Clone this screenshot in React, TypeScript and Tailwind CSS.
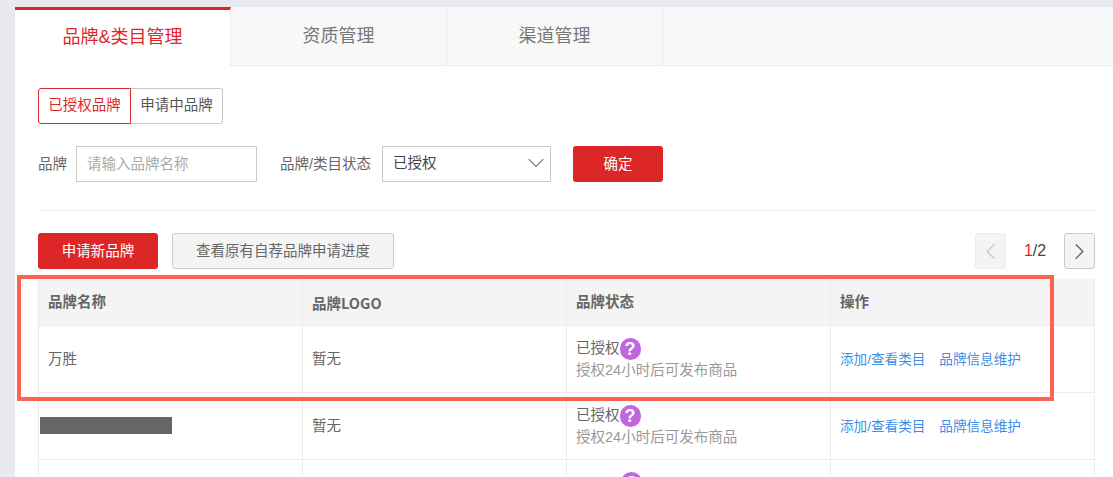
import * as React from "react";
import { ChevronDown, ChevronLeft, ChevronRight } from "lucide-react";

const font = "font-['Liberation_Sans','Noto_Sans_CJK_SC',sans-serif]";

function Tab({ label, active }: { label: string; active?: boolean }) {
  if (active) {
    return (
      <div className="w-[216px] h-[59px] shrink-0 bg-white border-t-[3px] border-r border-r-[#ececec] border-t-[#dd2727] flex items-center justify-center pb-[2px] text-[18px] text-[#dd2727]">
        {label}
      </div>
    );
  }
  return (
    <div className="w-[216px] h-[59px] shrink-0 border-r border-b border-[#ececec] flex items-center justify-center text-[18px] text-[#777]">
      {label}
    </div>
  );
}

function HelpDot() {
  return (
    <span className="w-[21px] h-[22px] rounded-full bg-[#c165e0] text-white font-bold text-[18px] leading-[22px] text-center">
      ?
    </span>
  );
}

function Status() {
  return (
    <div>
      <div className="flex items-center h-[22px] text-[14.5px] text-[#666]">
        已授权
        <HelpDot />
      </div>
      <div className="text-[14.5px] leading-[20px] text-[#999]">授权24小时后可发布商品</div>
    </div>
  );
}

function Row({ brand, hidden }: { brand?: string; hidden?: boolean }) {
  return (
    <div className="grid grid-cols-[264px_264px_264px_1fr] h-[67px] border-b border-[#ececec] text-[14.5px] text-[#666]">
      <div className="border-r border-[#ececec] flex items-center pl-[9px]">
        {hidden ? <div className="w-[132px] h-[17px] bg-[#666] -ml-[8px] -mt-px" /> : <span className="pt-[2px]">{brand}</span>}
      </div>
      <div className="border-r border-[#ececec] flex items-center pl-[9px] pt-[2px]">暂无</div>
      <div className="border-r border-[#ececec] flex items-center pl-[9px]">
        <Status />
      </div>
      <div className="flex items-center pl-[9px] pt-[3px] gap-[14px] text-[13.6px] text-[#3d8ee8]">
        <span>添加/查看类目</span>
        <span>品牌信息维护</span>
      </div>
    </div>
  );
}

// third row only peeks in at the bottom of the window
function PeekRow() {
  return (
    <div className="grid grid-cols-[264px_264px_264px_1fr] h-[67px]">
      <div className="border-r border-[#ececec]" />
      <div className="border-r border-[#ececec]" />
      <div className="border-r border-[#ececec] pl-[54px] pt-[12px] flex items-start">
        <HelpDot />
      </div>
      <div />
    </div>
  );
}

export default function App() {
  return (
    <div className={`relative h-[477px] overflow-hidden bg-[#e9eaef] pt-[7px] pl-[15px] ${font}`}>
      <div className="bg-white h-full">
        <div className="flex bg-[#f8f8f8]">
          <Tab label="品牌&类目管理" active />
          <Tab label="资质管理" />
          <Tab label="渠道管理" />
          <div className="flex-1 border-b border-[#ececec]" />
        </div>

        <div className="pl-[23px] pr-[18px] pt-[22px]">
          <div className="flex text-[14.5px] h-[36px]">
            <div className="w-[93px] border border-[#dd2727] rounded-l-[3px] text-[#dd2727] flex items-center justify-center">
              已授权品牌
            </div>
            <div className="w-[92px] border border-l-0 border-[#c9c9c9] rounded-r-[3px] text-[#555] flex items-center justify-center">
              申请中品牌
            </div>
          </div>

          <div className="flex items-center mt-[22px] h-[36px] text-[14.5px] text-[#666]">
            <span className="w-[38px] pt-px">品牌</span>
            <div className="w-[181px] h-full border border-[#c9c9c9] flex items-center pl-[10px] pt-px text-[#a9a9a9]">
              请输入品牌名称
            </div>
            <span className="ml-[23px] w-[102px] pt-px">品牌/类目状态</span>
            <div className="w-[169px] h-full border border-[#c9c9c9] flex items-center justify-between pl-[10px] text-[#444]">
              已授权
              <ChevronDown size={28} strokeWidth={1.1} className="text-[#888] -mt-[2px]" />
            </div>
            <div className="ml-[22px] w-[90px] h-full rounded-[3px] bg-[#dd2727] text-white flex items-center justify-center pt-[2px]">
              确定
            </div>
          </div>

          <div className="mt-[28px] border-t border-[#ececec]" />

          <div className="flex items-center mt-[22px] h-[36px] text-[14.5px]">
            <div className="w-[120px] h-full rounded-[3px] bg-[#dd2727] text-white flex items-center justify-center pt-px">
              申请新品牌
            </div>
            <div className="ml-[14px] w-[222px] h-full rounded-[3px] border border-[#c9c9c9] bg-[#f4f4f4] text-[#666] flex items-center justify-center pt-px">
              查看原有自荐品牌申请进度
            </div>
            <div className="ml-auto w-[31px] h-full rounded-[3px] border border-[#ececec] bg-[#f4f4f4] flex items-center justify-center text-[#c9c9c9]">
              <ChevronLeft size={27} strokeWidth={1.2} />
            </div>
            <div className="w-[58px] text-center text-[16px] text-[#444]">
              <span className="text-[#dd2727]">1</span>/2
            </div>
            <div className="w-[31px] h-full rounded-[3px] border border-[#c9c9c9] bg-[#f4f4f4] flex items-center justify-center text-[#666]">
              <ChevronRight size={27} strokeWidth={1.2} />
            </div>
          </div>

          <div className="mt-[10px] border-l border-r border-[#ececec]">
            <div className="grid grid-cols-[264px_264px_264px_1fr] h-[47px] bg-[#f4f4f4] border-b border-[#ececec] text-[14.5px] font-bold text-[#666]">
              <div className="border-r border-[#ececec] flex items-center pl-[9px] pt-px">品牌名称</div>
              <div className="border-r border-[#ececec] flex items-center pl-[9px] pt-px font-['Noto_Sans_CJK_SC',sans-serif]">
                品牌LOGO
              </div>
              <div className="border-r border-[#ececec] flex items-center pl-[9px] pt-px">品牌状态</div>
              <div className="flex items-center pl-[9px] pt-px">操作</div>
            </div>
            <Row brand="万胜" />
            <Row hidden />
            <PeekRow />
          </div>
        </div>
      </div>

      {/* annotation box */}
      <div className="absolute left-[17px] top-[275px] w-[1037px] h-[126px] border-[4px] border-[#ff6250]" />
    </div>
  );
}
